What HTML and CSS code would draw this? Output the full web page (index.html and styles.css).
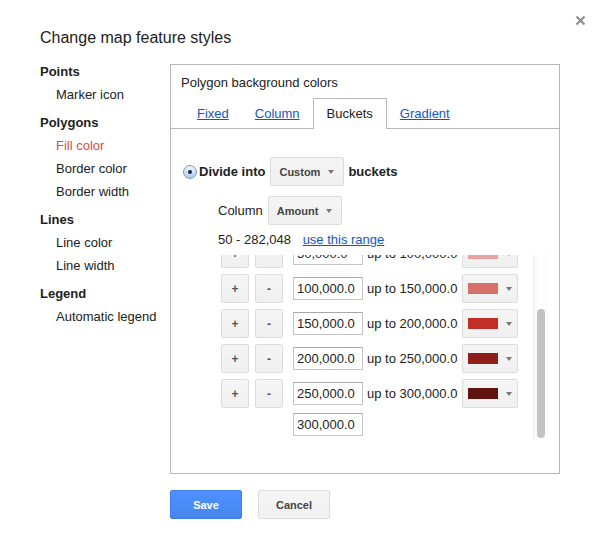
FILE: index.html
```html
<!DOCTYPE html>
<html lang="en">
<head>
  <meta charset="UTF-8">
  <meta name="viewport" content="width=device-width, initial-scale=1.0">
  <link rel="stylesheet" href="styles.css">
  <title>Change map feature styles</title>
</head>
<body>
  <div class="dialog">
    <span class="dialog_close">
      <svg width="11" height="11" viewBox="0 0 11 11"><path d="M1.5 1.5 L9.5 9.5 M9.5 1.5 L1.5 9.5" stroke="#8e8e8e" stroke-width="2.2" fill="none"/></svg>
    </span>
    <h1 class="dialog_title">Change map feature styles</h1>

    <div class="dialog_body">
      <!-- left menu -->
      <div class="feature_nav">
        <div class="nav_group">
          <p class="nav_heading">Points</p>
          <a class="nav_item">Marker icon</a>
        </div>
        <div class="nav_group">
          <p class="nav_heading">Polygons</p>
          <a class="nav_item nav_current">Fill color</a>
          <a class="nav_item">Border color</a>
          <a class="nav_item">Border width</a>
        </div>
        <div class="nav_group">
          <p class="nav_heading">Lines</p>
          <a class="nav_item">Line color</a>
          <a class="nav_item">Line width</a>
        </div>
        <div class="nav_group">
          <p class="nav_heading">Legend</p>
          <a class="nav_item">Automatic legend</a>
        </div>
      </div>

      <div class="style_column">
        <div class="style_panel">
          <p class="panel_title">Polygon background colors</p>
          <div class="panel_tabs">
            <a class="panel_tab" href="#">Fixed</a>
            <a class="panel_tab" href="#">Column</a>
            <span class="panel_tab tab_selected">Buckets</span>
            <a class="panel_tab" href="#">Gradient</a>
          </div>

          <div class="divide_row">
            <span class="radio"><span class="radio_dot"></span></span>
            <span class="divide_label">Divide into</span>
            <span class="select_button">Custom<span class="select_arrow"></span></span>
            <span class="divide_label buckets_label">buckets</span>
          </div>

          <div class="column_row">
            <span>Column</span>
            <span class="select_button">Amount<span class="select_arrow"></span></span>
          </div>

          <p class="range_row">50 - 282,048 <a href="#">use this range</a></p>

          <div class="bucket_scroll">
            <div class="bucket_view">
              <div class="bucket_list">
                <div class="bucket_row">
                  <span class="small_button">+</span>
                  <span class="small_button">-</span>
                  <input class="bucket_input" type="text" value="50,000.0">
                  <span class="bucket_upper">up to 100,000.0</span>
                  <span class="color_button"><span class="swatch" style="background: #e8a0a0"></span><span class="select_arrow"></span></span>
                </div>
                <div class="bucket_row">
                  <span class="small_button">+</span>
                  <span class="small_button">-</span>
                  <input class="bucket_input" type="text" value="100,000.0">
                  <span class="bucket_upper">up to 150,000.0</span>
                  <span class="color_button"><span class="swatch" style="background: #d8706a"></span><span class="select_arrow"></span></span>
                </div>
                <div class="bucket_row">
                  <span class="small_button">+</span>
                  <span class="small_button">-</span>
                  <input class="bucket_input" type="text" value="150,000.0">
                  <span class="bucket_upper">up to 200,000.0</span>
                  <span class="color_button"><span class="swatch" style="background: #c02f28"></span><span class="select_arrow"></span></span>
                </div>
                <div class="bucket_row">
                  <span class="small_button">+</span>
                  <span class="small_button">-</span>
                  <input class="bucket_input" type="text" value="200,000.0">
                  <span class="bucket_upper">up to 250,000.0</span>
                  <span class="color_button"><span class="swatch" style="background: #8e1e19"></span><span class="select_arrow"></span></span>
                </div>
                <div class="bucket_row">
                  <span class="small_button">+</span>
                  <span class="small_button">-</span>
                  <input class="bucket_input" type="text" value="250,000.0">
                  <span class="bucket_upper">up to 300,000.0</span>
                  <span class="color_button"><span class="swatch" style="background: #601410"></span><span class="select_arrow"></span></span>
                </div>
                <div class="bucket_last">
                  <input class="bucket_input" type="text" value="300,000.0">
                </div>
              </div>
            </div>
            <div class="scroll_track">
              <div class="scroll_thumb"></div>
            </div>
          </div>
        </div>

        <div class="dialog_buttons">
          <button class="btn btn_save">Save</button>
          <button class="btn btn_cancel">Cancel</button>
        </div>
      </div>
    </div>
  </div>
</body>
</html>
```
FILE: styles.css
```css
/* Basics */
body {
  margin: 0;
  background-color: #ffffff;
  color: #222222;
  font-family: "Liberation Sans", Arial, sans-serif;
  font-size: 13px;
}

p {
  margin: 0;
}

a {
  color: #1155cc;
}

.dialog {
  position: relative;
  box-sizing: border-box;
  width: 598px;
  height: 539px;
  padding-top: 28px;
}

.dialog_close {
  position: absolute;
  left: 575px;
  top: 15px;
  width: 11px;
  height: 11px;
}

.dialog_close svg {
  display: block;
}

.dialog_title {
  margin: 0 0 0 40px;
  font-size: 16px;
  font-weight: normal;
  line-height: 20px;
}

.dialog_body {
  display: flex;
  margin-top: 12px;
  padding-left: 40px;
}

/* Left menu */
.feature_nav {
  width: 130px;
}

.nav_group {
  margin-top: 5px;
}

.nav_group:first-child {
  margin-top: 0;
}

.nav_heading {
  font-weight: bold;
  line-height: 23px;
}

.nav_item {
  display: block;
  padding-left: 16px;
  line-height: 23px;
  color: #222222;
}

.nav_current {
  color: #dd4b39;
}

/* Style panel */
.style_column {
  margin-top: 4px;
}

.style_panel {
  box-sizing: border-box;
  width: 390px;
  height: 410px;
  border: 1px solid #b8b8b8;
}

.panel_title {
  padding: 10px 10px 0;
  line-height: 16px;
}

.panel_tabs {
  display: flex;
  height: 30px;
  margin-top: 7px;
  padding-left: 13px;
  border-bottom: 1px solid #b8b8b8;
}

.panel_tab {
  height: 29px;
  line-height: 29px;
  padding: 0 12px;
  border: 1px solid transparent;
  border-bottom: none;
}

.tab_selected {
  height: 30px;
  padding: 0 13px;
  border-color: #b8b8b8;
  background-color: #ffffff;
  color: #222222;
}

.divide_row {
  display: flex;
  align-items: center;
  height: 29px;
  margin-top: 28px;
  padding-left: 12px;
}

.radio {
  display: flex;
  justify-content: center;
  align-items: center;
  box-sizing: border-box;
  width: 14px;
  height: 14px;
  border: 1px solid #7e93aa;
  border-radius: 50%;
  background: linear-gradient(#eef5fd, #a9cdf2);
}

.radio_dot {
  width: 4px;
  height: 4px;
  border-radius: 50%;
  background-color: #1c2630;
}

.divide_label {
  margin-left: 2px;
  font-weight: bold;
}

.buckets_label {
  margin-left: 4px;
}

.select_button {
  display: flex;
  align-items: center;
  box-sizing: border-box;
  height: 29px;
  margin-left: 5px;
  padding: 0 9px 0 8px;
  border: 1px solid #dcdcdc;
  border-radius: 2px;
  background: linear-gradient(#f5f5f5, #f0f0f0);
  color: #444444;
  font-size: 11px;
  font-weight: bold;
}

.select_arrow {
  width: 0;
  height: 0;
  margin-left: 8px;
  border-left: 3.5px solid transparent;
  border-right: 3.5px solid transparent;
  border-top: 4px solid #777777;
}

.column_row {
  display: flex;
  align-items: center;
  height: 29px;
  margin-top: 10px;
  padding-left: 47px;
}

.range_row {
  margin-top: 6px;
  padding-left: 47px;
  line-height: 17px;
}

.range_row a {
  margin-left: 8px;
}

/* Buckets list */
.bucket_scroll {
  display: flex;
  height: 184px;
  margin: 7px 11px 0 47px;
}

.bucket_view {
  flex: 1;
  overflow: hidden;
}

.bucket_list {
  margin-top: -16px;
  padding-left: 3px;
}

.bucket_row {
  display: flex;
  align-items: center;
  height: 29px;
  margin-bottom: 6px;
}

.small_button {
  display: flex;
  justify-content: center;
  align-items: center;
  box-sizing: border-box;
  width: 28px;
  height: 29px;
  margin-right: 6px;
  border: 1px solid #dcdcdc;
  border-radius: 2px;
  background: linear-gradient(#f5f5f5, #f0f0f0);
  color: #555555;
  font-size: 12px;
  font-weight: bold;
}

.small_button + .small_button {
  margin-right: 10px;
}

.bucket_input {
  box-sizing: border-box;
  width: 70px;
  height: 23px;
  margin: 0;
  padding: 0 3px;
  border: 1px solid #c4c4c4;
  border-top-color: #a8a8a8;
  border-radius: 1px;
  font-family: inherit;
  font-size: 13px;
  color: #222222;
}

.bucket_upper {
  width: 95px;
  margin-left: 4px;
  white-space: nowrap;
}

.color_button {
  display: flex;
  align-items: center;
  box-sizing: border-box;
  width: 56px;
  height: 29px;
  padding-left: 5px;
  border: 1px solid #dcdcdc;
  border-radius: 2px;
  background: linear-gradient(#f5f5f5, #f0f0f0);
}

.color_button .select_arrow {
  margin-left: 8px;
}

.swatch {
  width: 30px;
  height: 11px;
}

.bucket_last {
  margin-top: -1px;
  padding-left: 72px;
}

.scroll_track {
  box-sizing: border-box;
  width: 15px;
  padding-top: 54px;
  border-left: 1px solid #f0f0f0;
  background: linear-gradient(to right, #f7f7f7, #ffffff 40%, #fafafa);
}

.scroll_thumb {
  width: 8px;
  height: 129px;
  margin-left: 3px;
  border-radius: 4px;
  background-color: #c2c2c2;
}

/* Save / Cancel */
.dialog_buttons {
  display: flex;
  gap: 16px;
  margin-top: 16px;
}

.btn {
  box-sizing: border-box;
  width: 72px;
  height: 29px;
  border-radius: 2px;
  font-family: inherit;
  font-size: 11px;
  font-weight: bold;
  cursor: pointer;
}

.btn_save {
  border: 1px solid #3f7ee8;
  background: linear-gradient(#4d90fe, #4787ed);
  color: #ffffff;
}

.btn_cancel {
  border: 1px solid #dcdcdc;
  background: linear-gradient(#f5f5f5, #f1f1f1);
  color: #444444;
}
```
